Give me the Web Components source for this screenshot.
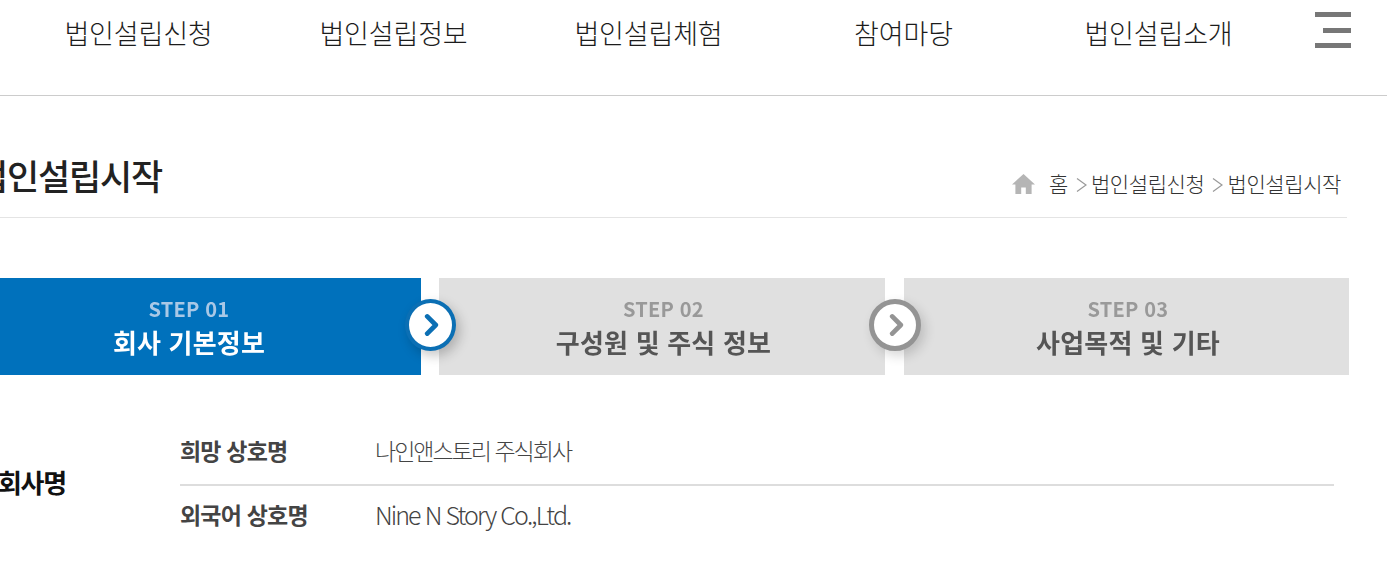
<!DOCTYPE html>
<html lang="ko">
<head>
<meta charset="utf-8">
<title>법인설립시작</title>
<style>
    html, body { margin: 0; padding: 0; background: #fff; overflow: hidden; }
    body { font-family: "Noto Sans CJK KR", "Noto Sans", sans-serif; color: #222; }
</style>
</head>
<body>
<site-header></site-header>
<page-title heading="법인설립시작"></page-title>
<step-bar></step-bar>
<company-form></company-form>

<script>
class SiteHeader extends HTMLElement {
    constructor() {
        super();
        this.attachShadow({ mode: "open" });
        const menu = ["법인설립신청", "법인설립정보", "법인설립체험", "참여마당", "법인설립소개"];
        this.shadowRoot.innerHTML = `
            <style>
                :host { display: block; height: 95px; border-bottom: 1px solid #ccc; }
                .bar { display: flex; padding-left: 11px; padding-top: 12px; }
                a { width: 255px; text-align: center; font-size: 27px; line-height: 42px; color: #1c1c1c; letter-spacing: -.15px; font-weight: 300; }
                .ham { display: flex; flex-direction: column; align-items: flex-end; gap: 10.5px; width: 36px; margin-left: 29px; }
                .ham i { display: block; height: 5px; width: 100%; background: #777; }
                .ham i:nth-child(2) { width: 28px; }
            </style>
            <div class="bar">
                ${menu.map((m) => `<a>${m}</a>`).join("")}
                <div class="ham"><i></i><i></i><i></i></div>
            </div>
        `;
    }
}

class PageTitle extends HTMLElement {
    constructor() {
        super();
        this.attachShadow({ mode: "open" });
        this.shadowRoot.innerHTML = `
            <style>
                :host { display: block; margin: 0 40px 0 -24px; height: 122px; border-bottom: 1px solid #e4e4e4; box-sizing: border-box; }
                .row { display: flex; justify-content: space-between; height: 121px; }
                h1 { margin: 0; padding-top: 52px; font-size: 35px; line-height: 54px; font-weight: 500; letter-spacing: -1.2px; color: #222; }
                nav { display: flex; align-items: center; padding-top: 71px; height: 32px; padding-right: 6px; font-size: 21px; line-height: 32px; color: #333; letter-spacing: -.4px; font-weight: 300; }
                .home { width: 23px; height: 20px; margin: 1px 14px 0 0; }
                .sep { width: 11px; height: 16px; margin: 4px 4px 0 8px; }
            </style>
            <div class="row">
                <h1>${this.getAttribute("heading")}</h1>
                <nav>
                    <svg class="home" viewBox="0 0 23 20"><path fill="#b5b5b5" d="M11.5 0 0 10.5h3.4V20h5.8v-6.4h4.6V20h5.8v-9.5H23z"/></svg>
                    <span>홈</span>
                    <svg class="sep" viewBox="0 0 11 16"><path fill="none" stroke="#999" stroke-width="1.2" d="M1 1.5 10 8 1 14.5"/></svg>
                    <span>법인설립신청</span>
                    <svg class="sep" viewBox="0 0 11 16"><path fill="none" stroke="#999" stroke-width="1.2" d="M1 1.5 10 8 1 14.5"/></svg>
                    <span>법인설립시작</span>
                </nav>
            </div>
        `;
    }
}

class StepItem extends HTMLElement {
    constructor() {
        super();
        this.attachShadow({ mode: "open" });
        this.shadowRoot.innerHTML = `
            <style>
                :host { display: flex; flex-direction: column; align-items: center; box-sizing: border-box; height: 97px; padding: 17px 0 0 3px; background: #e0e0e0; color: #555; position: relative; }
                :host([active]) { background: #0071bc; color: #fff; }
                .num { font-size: 20px; line-height: 27px; font-weight: 700; color: #999; letter-spacing: .2px; filter: blur(.4px); }
                :host([active]) .num { color: #a9c8e6; }
                .name { font-size: 26px; line-height: 36px; font-weight: 700; letter-spacing: .2px; margin-top: 2px; filter: blur(.4px); }
                .arrow { position: absolute; top: 21px; right: -36px; width: 52px; height: 52px; z-index: 2; box-sizing: border-box; border-radius: 50%; background: #fff; border: 5px solid #949494; box-shadow: 4px 5px 12px rgba(0,0,0,.16); display: flex; align-items: center; justify-content: center; }
                :host([active]) .arrow { width: 51px; border-color: #0b6fb4; border-width: 4px; right: -35px; box-shadow: 4px 5px 12px rgba(0,0,0,.22); }
                .arrow svg { width: 15px; height: 24px; margin-left: 2px; }
                .arrow path { stroke: #949494; }
                :host([active]) .arrow path { stroke: #0b6fb4; }
                :host([last]) .arrow { display: none; }
            </style>
            <span class="num">${this.getAttribute("num")}</span>
            <span class="name"><slot></slot></span>
            <div class="arrow"><svg viewBox="0 0 14 22"><path fill="none" stroke-width="4.4" stroke-linecap="round" stroke-linejoin="round" d="M3 3l8 8-8 8"/></svg></div>
        `;
    }
}

class StepBar extends HTMLElement {
    constructor() {
        super();
        this.attachShadow({ mode: "open" });
        this.shadowRoot.innerHTML = `
            <style>
                :host { display: block; margin: 60px 38px 0 -46px; }
                .steps { display: grid; grid-template-columns: 467px 446px 446px; gap: 18px; }
                step-item:nth-child(3) { margin-left: 1px; }
            </style>
            <div class="steps">
                <step-item active num="STEP 01">회사 기본정보</step-item>
                <step-item num="STEP 02">구성원 및 주식 정보</step-item>
                <step-item last num="STEP 03">사업목적 및 기타</step-item>
            </div>
        `;
    }
}

class InfoRow extends HTMLElement {
    constructor() {
        super();
        this.attachShadow({ mode: "open" });
        this.shadowRoot.innerHTML = `
            <style>
                :host { display: flex; align-items: center; height: 58px; }
                .cell { display: flex; align-items: center; padding-bottom: 3px; }
                b { width: 195px; font-size: 23px; font-weight: 700; color: #444; letter-spacing: -.8px; }
                span { font-size: 23px; font-weight: 300; color: #444; letter-spacing: -2px; }
                :host([latin]) span { font-size: 25px; letter-spacing: -1.93px; }
                :host([divider]) { height: 66px; border-bottom: 2px solid #ddd; }
            </style>
            <div class="cell">
                <b>${this.getAttribute("label")}</b>
                <span><slot></slot></span>
            </div>
        `;
    }
}

class CompanyForm extends HTMLElement {
    constructor() {
        super();
        this.attachShadow({ mode: "open" });
        this.shadowRoot.innerHTML = `
            <style>
                :host { display: flex; align-items: center; margin: 43px 53px 0 -2px; }
                h2 { margin: 0; padding-top: 1px; width: 182px; flex: none; font-size: 26px; font-weight: 700; color: #111; letter-spacing: -1.3px; }
                .rows { flex: 1; }
            </style>
            <h2>회사명</h2>
            <div class="rows">
                <info-row divider label="희망 상호명">나인앤스토리 주식회사</info-row>
                <info-row latin label="외국어 상호명">Nine N Story Co.,Ltd.</info-row>
            </div>
        `;
    }
}

customElements.define("site-header", SiteHeader);
customElements.define("page-title", PageTitle);
customElements.define("step-item", StepItem);
customElements.define("step-bar", StepBar);
customElements.define("info-row", InfoRow);
customElements.define("company-form", CompanyForm);
</script>
</body>
</html>
